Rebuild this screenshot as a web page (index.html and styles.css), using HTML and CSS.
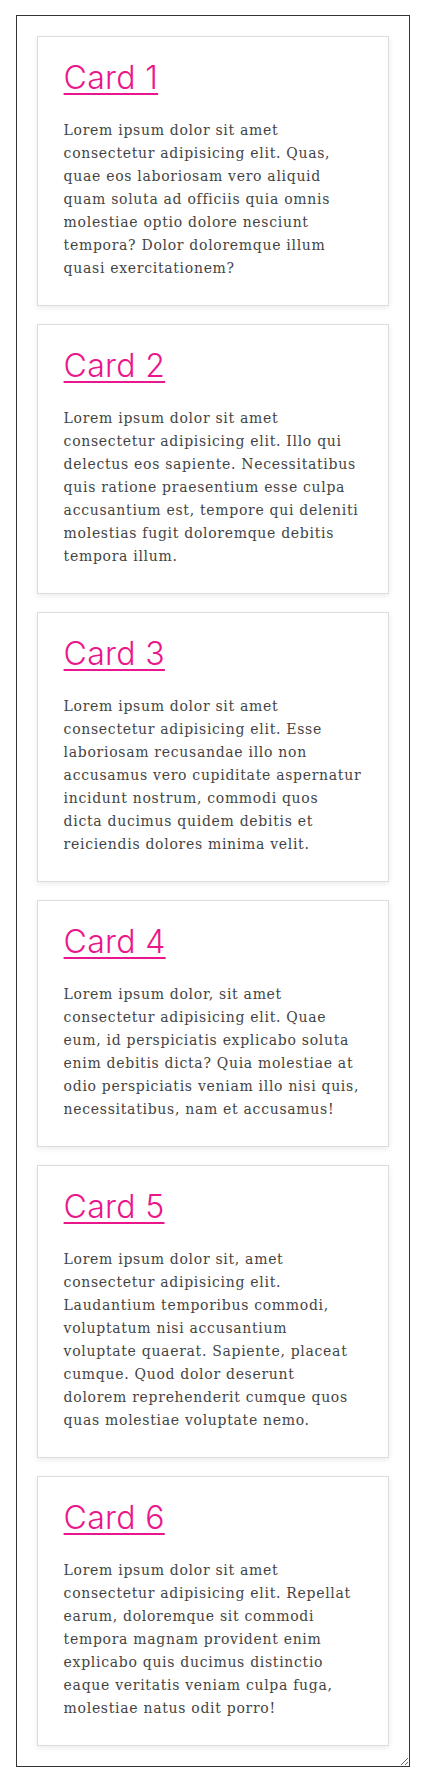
FILE: index.html
```html
<!DOCTYPE html>
<html lang="en">
<head>
<meta charset="utf-8">
<title>Cards</title>
<link rel="stylesheet" href="styles.css">
</head>
<body>
<div class="frame">
  <div class="card">
    <h2 class="card-title"><a href="#">Card 1</a></h2>
    <p class="card-text">Lorem ipsum dolor sit amet consectetur adipisicing elit. Quas, quae eos laboriosam vero aliquid quam soluta ad officiis quia omnis molestiae optio dolore nesciunt tempora? Dolor doloremque illum quasi exercitationem?</p>
  </div>
  <div class="card">
    <h2 class="card-title"><a href="#">Card 2</a></h2>
    <p class="card-text">Lorem ipsum dolor sit amet consectetur adipisicing elit. Illo qui delectus eos sapiente. Necessitatibus quis ratione praesentium esse culpa accusantium est, tempore qui deleniti molestias fugit doloremque debitis tempora illum.</p>
  </div>
  <div class="card">
    <h2 class="card-title"><a href="#">Card 3</a></h2>
    <p class="card-text">Lorem ipsum dolor sit amet consectetur adipisicing elit. Esse laboriosam recusandae illo non accusamus vero cupiditate aspernatur incidunt nostrum, commodi quos<br>dicta ducimus quidem debitis et reiciendis dolores minima velit.</p>
  </div>
  <div class="card">
    <h2 class="card-title"><a href="#">Card 4</a></h2>
    <p class="card-text">Lorem ipsum dolor, sit amet consectetur adipisicing elit. Quae eum, id perspiciatis explicabo soluta enim debitis dicta? Quia molestiae at odio perspiciatis veniam illo nisi quis, necessitatibus, nam et accusamus!</p>
  </div>
  <div class="card">
    <h2 class="card-title"><a href="#">Card 5</a></h2>
    <p class="card-text">Lorem ipsum dolor sit, amet consectetur adipisicing elit. Laudantium temporibus commodi, voluptatum nisi accusantium voluptate quaerat. Sapiente, placeat cumque. Quod dolor deserunt dolorem reprehenderit cumque quos quas molestiae voluptate nemo.</p>
  </div>
  <div class="card">
    <h2 class="card-title"><a href="#">Card 6</a></h2>
    <p class="card-text">Lorem ipsum dolor sit amet consectetur adipisicing elit. Repellat earum, doloremque sit commodi tempora magnam provident enim explicabo quis ducimus distinctio eaque veritatis veniam culpa fuga, molestiae natus odit porro!</p>
  </div>
</div>
</body>
</html>
```

FILE: styles.css
```css
html, body {
  margin: 0;
  padding: 0;
  background: #fff;
}

body {
  font-family: "DejaVu Serif", "Liberation Serif", serif;
}

.frame {
  margin: 15px 16px 16px;
  border: 1px solid #333;
  padding: 20px;
  display: flex;
  flex-direction: column;
  gap: 18px;
  resize: both;
  overflow: auto;
}

.card {
  border: 1px solid #dcdcdc;
  background: #fff;
  padding: 25px 25.6px;
  box-shadow: 0 2px 6px rgba(0, 0, 0, 0.08);
}

.card-title {
  margin: 0 0 25px;
  font-family: "Inter", "Lato", sans-serif;
  font-weight: 300;
  font-size: 32px;
  line-height: 1;
  letter-spacing: 0.3px;
}

.card-title a {
  color: #ea168b;
  text-decoration: underline;
  text-decoration-thickness: 2px;
  text-underline-offset: 4px;
}

.card-text {
  margin: 0;
  font-size: 14px;
  line-height: 23px;
  letter-spacing: 0.05em;
  color: #444;
}
```
